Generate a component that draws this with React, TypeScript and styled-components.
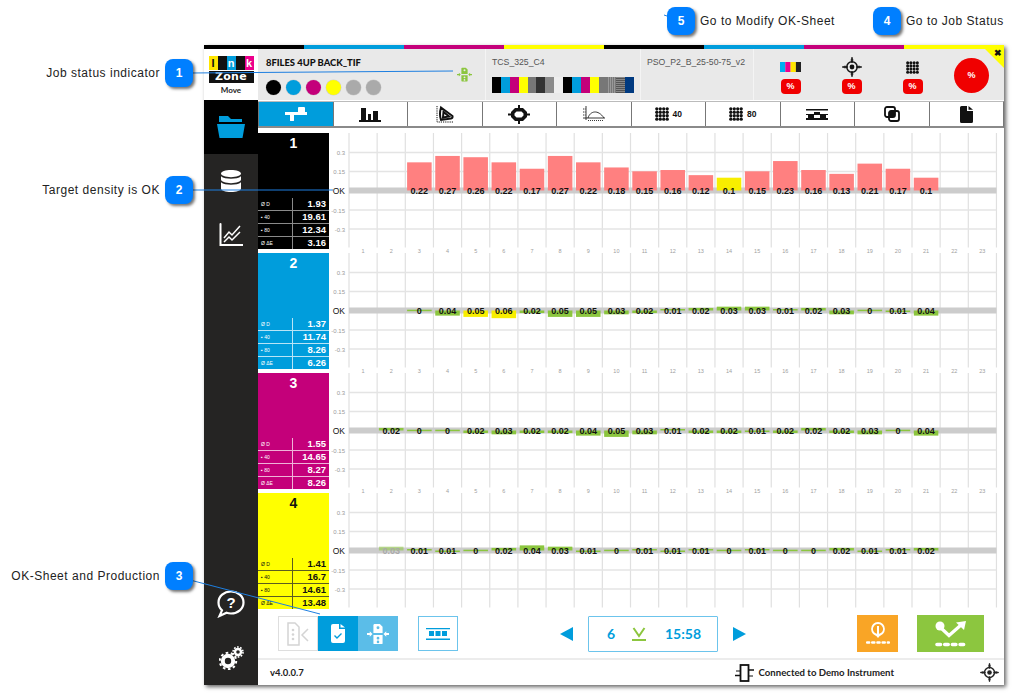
import React from "react";
import styled, { createGlobalStyle } from "styled-components";

const CYAN = "#009ddc";
const MAGENTA = "#c4007a";
const YELLOW = "#ffff00";
const GREEN = "#8cc63f";

const GlobalStyle = createGlobalStyle`
  html, body { margin: 0; padding: 0; background: #fff; }
  body { font-family: "Liberation Sans", Arial, sans-serif; }
`;

// Page and window
const Page = styled.div`
  position: relative;
  width: 1020px;
  height: 694px;
  padding: 45px 0 0 204px;
  box-sizing: border-box;
  overflow: hidden;
`;

const Window = styled.div`
  width: 800px;
  height: 640px;
  display: flex;
  flex-direction: column;
  background: #fff;
  box-shadow: 2px 2px 4px rgba(0, 0, 0, 0.6);
`;

const ColorStrip = styled.div`
  height: 4px;
  flex: none;
  display: grid;
  grid-template-columns: repeat(8, 1fr);
`;

const StripPart = styled.div<{ $c: string }>`
  background: ${(p) => p.$c};
`;

// Header
const Header = styled.header`
  height: 51px;
  flex: none;
  display: flex;
  position: relative;
  background: #e9e9e9;
  overflow: hidden;
`;

const LogoBox = styled.div`
  width: 54px;
  flex: none;
  background: #fff;
  display: flex;
  flex-direction: column;
  align-items: center;
  padding-top: 7px;
  box-sizing: border-box;
`;

const LogoTiles = styled.div`
  width: 45px;
  height: 14px;
  background: #111;
  display: flex;
  justify-content: space-between;
`;

const LogoTile = styled.span<{ $c: string; $fg: string }>`
  width: 9px;
  background: ${(p) => p.$c};
  color: ${(p) => p.$fg};
  font: bold 11px/14px "Liberation Sans", sans-serif;
  text-align: center;
`;

const LogoZone = styled.div`
  width: 45px;
  height: 12px;
  margin-top: 1px;
  background: #111;
  color: #fff;
  font: bold 11px/12px "DejaVu Sans", sans-serif;
  letter-spacing: 0.3px;
  text-align: center;
  overflow: hidden;
`;

const LogoMove = styled.div`
  margin-top: 2px;
  font: bold 8px/10px Lato, sans-serif;
  color: #222;
`;

const JobPanel = styled.div`
  width: 226px;
  flex: none;
  margin-left: 1px;
  padding: 8px 7px 0;
  box-sizing: border-box;
  position: relative;
`;

const JobTitle = styled.div`
  font: 900 9.4px/12px Lato, sans-serif;
  color: #111;
`;

const InkDots = styled.div`
  display: flex;
  gap: 5px;
  margin-top: 11px;
`;

const InkDot = styled.span<{ $c: string }>`
  width: 15px;
  height: 15px;
  border-radius: 50%;
  background: ${(p) => p.$c};
  box-shadow: 0 0 0 0.5px #cfcfcf;
`;

const StatusIcon = styled.div`
  position: absolute;
  left: 198px;
  top: 18px;
  color: ${GREEN};
  line-height: 0;
`;

const TargetPanel = styled.div<{ $w: number }>`
  width: ${(p) => p.$w}px;
  flex: none;
  padding: 8px 6px 0;
  box-sizing: border-box;
  border-left: 1px solid #f4f4f4;
  font: 8.7px/11px "Liberation Sans", sans-serif;
  color: #555;
`;

const SwatchBar = styled.div`
  display: flex;
  margin-top: 9px;
  height: 16px;
  width: 142px;
`;

const Swatch = styled.span<{ $c: string }>`
  flex: 1;
  background: ${(p) => p.$c};
`;

const MeterPanel = styled.div`
  flex: 1;
  display: flex;
  border-left: 1px solid #f4f4f4;
  padding-left: 16px;
  align-items: flex-start;
`;

const Meter = styled.div`
  width: 61px;
  flex: none;
  display: flex;
  flex-direction: column;
  align-items: center;
`;

const MeterMark = styled.div`
  height: 20px;
  margin: 8px 0 2px -20px;
  display: flex;
  align-items: center;
  color: #111;
`;

const PercentTag = styled.div`
  width: 20px;
  height: 15px;
  margin-left: -20px;
  border-radius: 4px;
  background: #f00000;
  color: #fff;
  font: bold 9px/15px "Liberation Sans", sans-serif;
  text-align: center;
`;

const PercentBall = styled.div`
  width: 35px;
  height: 35px;
  margin: 9px 0 0 1px;
  border-radius: 50%;
  background: #f00000;
  color: #fff;
  font: bold 9px/35px "Liberation Sans", sans-serif;
  text-align: center;
`;

const CloseCorner = styled.div`
  position: absolute;
  top: 0;
  right: 0;
  width: 0;
  height: 0;
  border-top: 19px solid ${YELLOW};
  border-left: 19px solid transparent;
`;

const CloseMark = styled.span`
  position: absolute;
  top: -1px;
  right: 2px;
  font: bold 9px/10px "Liberation Sans", sans-serif;
  color: #111;
`;

// Body
const Body = styled.div`
  flex: 1;
  min-height: 0;
  display: flex;
`;

const Sidebar = styled.nav`
  width: 54px;
  flex: none;
  background: #252423;
  display: flex;
  flex-direction: column;
  align-items: center;
  color: #fff;
`;

const SideItem = styled.div<{ $active?: boolean }>`
  width: 100%;
  height: 54px;
  flex: none;
  display: flex;
  align-items: center;
  justify-content: center;
  background: ${(p) => (p.$active ? "#000" : "transparent")};
`;

const SideSpacer = styled.div`
  flex: 1;
`;

const Main = styled.main`
  flex: 1;
  min-width: 0;
  display: flex;
  flex-direction: column;
`;

const TabBar = styled.div`
  height: 27px;
  flex: none;
  box-sizing: border-box;
  margin: 1px 0 5px;
  display: grid;
  grid-template-columns: repeat(10, 1fr);
  border-bottom: 2px solid #8a8a8a;
  border-right: 1px solid #777;
  border-top: 1px solid #bbb;
`;

const Tab = styled.div<{ $active?: boolean }>`
  display: flex;
  align-items: center;
  justify-content: center;
  gap: 4px;
  color: ${(p) => (p.$active ? "#fff" : "#111")};
  background: ${(p) => (p.$active ? CYAN : "#fff")};
  border-left: 1px solid #777;
  font: bold 8.5px/1 "Liberation Sans", sans-serif;
`;

const Rows = styled.div`
  height: 480px;
  flex: none;
  display: flex;
  flex-direction: column;
`;

const Row = styled.section`
  height: 120px;
  display: flex;
`;

const InkCard = styled.div<{ $bg: string; $fg: string; $rule: string }>`
  width: 71px;
  height: 116px;
  flex: none;
  display: flex;
  flex-direction: column;
  background: ${(p) => p.$bg};
  color: ${(p) => p.$fg};
  --rule: ${(p) => p.$rule};
`;

const CardTitle = styled.div`
  flex: 1;
  padding-top: 2px;
  text-align: center;
  font: bold 14px/17px "Liberation Sans", sans-serif;
`;

const StatRow = styled.div`
  height: 12px;
  display: grid;
  grid-template-columns: 35px 1fr;
  & + & {
    border-top: 1px solid var(--rule);
  }
`;

const StatName = styled.span`
  padding-left: 3px;
  font: 5px/12px "Liberation Sans", sans-serif;
  border-right: 1px solid var(--rule);
`;

const StatValue = styled.span`
  padding-right: 3px;
  text-align: right;
  font: bold 9.5px/12px "Liberation Sans", sans-serif;
`;

const ChartSvg = styled.svg`
  display: block;
  flex: none;
`;

const AxisText = styled.text`
  font: 6px "Liberation Sans", sans-serif;
  fill: #9a9a9a;
  text-anchor: end;
`;

const OkText = styled.text`
  font: 8.5px "Liberation Sans", sans-serif;
  fill: #111;
  text-anchor: end;
`;

const ZoneText = styled.text`
  font: 5.5px "Liberation Sans", sans-serif;
  fill: #a0a0a0;
  text-anchor: middle;
`;

const ValueText = styled.text<{ $faded?: boolean }>`
  font: bold 9px "Liberation Sans", sans-serif;
  fill: ${(p) => (p.$faded ? "#a9a9a9" : "#111")};
  text-anchor: middle;
`;

// Controls
const Controls = styled.div`
  height: 38px;
  flex: none;
  margin-top: 2px;
  padding-left: 20px;
  display: flex;
  align-items: stretch;
`;

const ModeGroup = styled.div`
  display: flex;
  margin-top: 1px;
`;

const ModeButton = styled.div<{ $bg: string; $fg: string; $edge: string }>`
  width: 40px;
  height: 35px;
  box-sizing: border-box;
  display: flex;
  align-items: center;
  justify-content: center;
  background: ${(p) => p.$bg};
  color: ${(p) => p.$fg};
  border: 1px solid ${(p) => p.$edge};
`;

const ViewButton = styled(ModeButton)`
  margin: 1px 0 0 20px;
`;

const Stepper = styled.div`
  margin-left: 102px;
  display: flex;
  align-items: center;
  color: ${CYAN};
`;

const Readout = styled.div`
  width: 130px;
  height: 36px;
  margin: 0 15px;
  box-sizing: border-box;
  display: flex;
  align-items: center;
  border: 1px solid #6cc4ec;
  border-radius: 1px;
  font: bold 14px/1 Lato, sans-serif;
  padding-left: 18px;
  color: ${CYAN};
`;

const ReadoutCount = styled.span`
  width: 25px;
`;

const ReadoutMark = styled.span`
  width: 33px;
  color: ${GREEN};
  line-height: 0;
`;

const ActionButton = styled.div<{ $c: string; $w: number; $gap: number }>`
  width: ${(p) => p.$w}px;
  height: 37px;
  margin-left: ${(p) => p.$gap}px;
  flex: none;
  display: flex;
  align-items: center;
  justify-content: center;
  background: ${(p) => p.$c};
  color: #fff;
`;

const StatusBar = styled.footer`
  flex: 1;
  margin-top: 5px;
  border-top: 2px solid #ececec;
  display: flex;
  align-items: center;
  padding: 0 5px 0 12px;
  font: bold 9.5px/1 Lato, sans-serif;
  color: #222;
`;

const Version = styled.span`
  flex: 1;
`;

const Connection = styled.span`
  display: flex;
  align-items: center;
  gap: 5px;
  margin-right: 86px;
  font-size: 9.6px;
`;

// Help-file annotations
const Callout = styled.div<{ $x: number; $y: number }>`
  position: absolute;
  left: ${(p) => p.$x}px;
  top: ${(p) => p.$y}px;
  display: flex;
  align-items: center;
  gap: 5px;
  z-index: 3;
`;

const LeftCallout = styled(Callout)`
  left: auto;
  right: ${(p) => p.$x}px;
`;

const CalloutText = styled.span`
  font: 12px/1 "Liberation Sans", sans-serif;
  letter-spacing: 0.52px;
  color: #222;
  white-space: nowrap;
`;

const Badge = styled.span`
  width: 28px;
  height: 28px;
  flex: none;
  border-radius: 8px;
  background: #007fff;
  color: #fff;
  font: bold 12px/28px "Liberation Sans", sans-serif;
  text-align: center;
  box-shadow: 2px 2px 3px rgba(0, 0, 0, 0.55);
`;

const LeaderLayer = styled.svg`
  position: absolute;
  inset: 0;
  z-index: 2;
  pointer-events: none;
`;

// Drawings
const DotsGrid = ({ size = 13 }: { size?: number }) => (
  <svg width={size} height={size} viewBox="0 0 14 14" fill="currentColor">
    {[0, 1, 2, 3].flatMap((r) =>
      [0, 1, 2, 3].map((c) => <circle key={`${r}${c}`} cx={1.8 + c * 3.47} cy={1.8 + r * 3.47} r={1.65} />)
    )}
  </svg>
);

const Crosshair = ({ size = 20 }: { size?: number }) => (
  <svg width={size} height={size} viewBox="0 0 20 20" fill="none" stroke="currentColor">
    <circle cx="10" cy="10" r="5.2" strokeWidth="1.5" />
    <circle cx="10" cy="10" r="2.4" fill="currentColor" stroke="none" />
    <path d="M10 0l1 3-1 3-1-3zM10 14l1 3-1 3-1-3zM0 10l3-1 3 1-3 1zM14 10l3-1 3 1-3 1z" fill="currentColor" strokeWidth="0.6" />
  </svg>
);

const TransferIcon = ({ size = 16 }: { size?: number }) => (
  <svg width={size} height={size} viewBox="0 0 24 24" fill="currentColor">
    <path fillRule="evenodd" d="M8 1h6l3 3v7H7V2zM12 3.500a1.600 1.600 0 1 0 0 3.200 1.600 1.600 0 0 0 0-3.200zM7 13h10v9a1 1 0 0 1-1 1H8a1 1 0 0 1-1-1zM12 15a1.500 1.500 0 1 0 0 3 1.500 1.500 0 0 0 0-3zM12 19.200a1.400 1.400 0 1 0 0 2.800 1.400 1.400 0 0 0 0-2.800z" />
    <path d="M0 11h3V9l3 3-3 3v-2H0zM24 11h-3V9l-3 3 3 3v-2h3z" />
  </svg>
);

const tabIcons = [
  <svg key="a" width="22" height="14" viewBox="0 0 22 14" fill="currentColor">
    <path d="M0 5h22v3H0zM5 5h4v8a1 1 0 0 1-4 0zM13 1a1 1 0 0 1 1-1h5a1 1 0 0 1 1 1v5h-7z" />
  </svg>,
  <svg key="b" width="22" height="15" viewBox="0 0 22 15" fill="currentColor">
    <path d="M0 13h22v2H0zM2 1h5v12H2zM9 7h3v6H9zM14 4h5v9h-5z" />
  </svg>,
  <svg key="c" width="20" height="19" viewBox="0 0 20 19" fill="none" stroke="currentColor">
    <path d="M2 1v16h17" strokeWidth="1" strokeDasharray="1.2 1" />
    <path d="M6 2.500 17.500 11 Q18 13 16 13.500 L6 15 Q4 9 6 2.500Z M8.500 7 L8 12.500 L14 11.500Z" strokeWidth="2" />
  </svg>,
  <svg key="d" width="22" height="19" viewBox="0 0 22 19" fill="currentColor">
    <path fillRule="evenodd" d="M7 3h8l4 4v5l-4 4H7l-4-4V7zM8.500 6.500 6.500 8.500v2l2 2h5l2-2v-2l-2-2z" />
    <path d="M10 0h2v3h-2zM10 16h2v3h-2zM0 8.500h3v2H0zM19 8.500h3v2h-3z" />
  </svg>,
  <svg key="e" width="22" height="16" viewBox="0 0 22 16" fill="none" stroke="#222" strokeWidth="0.9">
    <path d="M3 0v14M0 12h22" />
    <path d="M5 12C7 5 15 3 21 12" />
    <path d="M5 14.500h16" strokeDasharray="1 1" />
    <path d="M0 3h3M0 6h3M0 9h3" strokeDasharray="1 .6" />
  </svg>,
  <DotsGrid key="f" size={14} />,
  <DotsGrid key="g" size={14} />,
  <svg key="h" width="22" height="11" viewBox="0 0 22 11" fill="currentColor">
    <path d="M0 0h22v1.600H0zM0 9h22v2H0zM2 6h6v3H2zM8 3h6v3H8zM14 6h6v3h-6zM0 5h22v1H0z" />
  </svg>,
  <svg key="i" width="16" height="16" viewBox="0 0 16 16" fill="none" stroke="currentColor" strokeWidth="1.800">
    <rect x="1" y="1" width="10" height="10" rx="2" />
    <rect x="5" y="5" width="10" height="10" rx="2" />
    <rect x="5" y="5" width="6" height="6" fill="currentColor" stroke="none" />
  </svg>,
  <svg key="j" width="13" height="17" viewBox="0 0 13 17" fill="currentColor">
    <path d="M1.500 0H7v5h6v10.500a1.500 1.500 0 0 1-1.500 1.500h-10A1.500 1.500 0 0 1 0 15.500v-14A1.500 1.500 0 0 1 1.500 0zM8.500 0 13 3.800H8.500z" />
  </svg>,
];

const tabLabels = ["", "", "", "", "", "40", "80", "", "", ""];

const FolderIcon = () => (
  <svg width="28" height="22" viewBox="0 0 28 22" fill={CYAN}>
    <path d="M2 0h9l3 3h11v3H2zM0 8h28l-2.500 14h-23z" />
  </svg>
);

const DatabaseIcon = () => (
  <svg width="20" height="22" viewBox="0 0 20 22" fill="currentColor">
    <path d="M10 0c5.500 0 10 1.600 10 3.600S15.500 7.200 10 7.200 0 5.600 0 3.600 4.500 0 10 0zM0 6.300c2 1.800 6 2.500 10 2.500s8-.7 10-2.500v3.300c0 2-4.500 3.600-10 3.600S0 11.600 0 9.600zM0 12.300c2 1.800 6 2.500 10 2.500s8-.7 10-2.500v6.100c0 2-4.500 3.600-10 3.600S0 20.400 0 18.400z" />
  </svg>
);

const TrendIcon = () => (
  <svg width="24" height="24" viewBox="0 0 24 24" fill="none" stroke="currentColor">
    <path d="M1.500 1v21h22" strokeWidth="2" strokeLinecap="round" />
    <path d="M5 15l5-6 3 3 8-9M5 19l5-5 3 3 8-8" strokeWidth="1.500" />
  </svg>
);

const HelpIcon = () => (
  <svg width="28" height="28" viewBox="0 0 28 28" fill="none">
    <path d="M14 1.500c7 0 12.500 4.800 12.500 11S21 23.500 14 23.500c-1.600 0-3-.2-4.400-.7L2.500 26l2.500-5.600C2.800 18.400 1.500 15.600 1.500 12.500c0-6.200 5.500-11 12.500-11z" stroke="currentColor" strokeWidth="2.200" />
    <text x="14" y="18" textAnchor="middle" fill="currentColor" style={{ font: 'bold 15px "Liberation Sans", sans-serif' }}>?</text>
  </svg>
);

const GearsIcon = () => (
  <svg width="25" height="24" viewBox="0 0 25 24" fill="currentColor">
    <circle cx="9" cy="15" r="5.200" fill="none" stroke="currentColor" strokeWidth="4" />
    <circle cx="9" cy="15" r="8.200" fill="none" stroke="currentColor" strokeWidth="2" strokeDasharray="2.600 2.550" />
    <circle cx="19" cy="6" r="3" fill="none" stroke="currentColor" strokeWidth="2.400" />
    <circle cx="19" cy="6" r="5" fill="none" stroke="currentColor" strokeWidth="1.600" strokeDasharray="1.700 1.440" />
  </svg>
);

const SheetBackIcon = () => (
  <svg width="22" height="24" viewBox="0 0 22 24" fill="none" stroke="#d4d4d4">
    <path d="M1 1h7l4 4v18H1z" strokeWidth="1.500" />
    <g fill="#d4d4d4" stroke="none">
      <circle cx="6" cy="8" r="1.300" />
      <circle cx="6" cy="12.500" r="1.300" />
      <circle cx="6" cy="17" r="1.300" />
    </g>
    <path d="M21 7l-6 6 6 6" strokeWidth="1.500" />
  </svg>
);

const SheetCheckIcon = () => (
  <svg width="14" height="19" viewBox="0 0 14 19" fill="currentColor">
    <path d="M2 0h6v5h6v12a2 2 0 0 1-2 2H2a2 2 0 0 1-2-2V2a2 2 0 0 1 2-2zM9.500 0 14 3.600H9.500z" />
    <path d="M3.500 11.500l2.500 2.500 4.500-4.500" fill="none" stroke={CYAN} strokeWidth="1.400" />
  </svg>
);

const StripsIcon = () => (
  <svg width="24" height="12" viewBox="0 0 24 12" fill={CYAN}>
    <path d="M0 0h24v1.200H0zM0 10.500h24V12H0zM3 3h5v5H3zM9.500 3h5v5h-5zM16 3h5v5h-5z" />
  </svg>
);

const TouchIcon = () => (
  <svg width="24" height="26" viewBox="0 0 24 26" fill="none" stroke="currentColor">
    <circle cx="12" cy="8" r="6" strokeWidth="1.800" />
    <path d="M12 5v11" strokeWidth="2" />
    <path d="M9 13.500l3 3.500 3-3.500z" fill="currentColor" stroke="none" />
    <path d="M1 21.500h22" strokeWidth="2.400" strokeLinecap="round" strokeDasharray="2.200 3" />
  </svg>
);

const ConfirmIcon = () => (
  <svg width="34" height="26" viewBox="0 0 34 26" fill="none" stroke="currentColor">
    <circle cx="6" cy="5" r="4.500" fill="currentColor" stroke="none" />
    <path d="M7 7l8 7.500L27 4" strokeWidth="3.200" />
    <path d="M22 1.500L32 0l-2 9z" fill="currentColor" stroke="none" />
    <path d="M3 23.500h28" strokeWidth="3.600" strokeLinecap="round" strokeDasharray="3.500 4.200" />
  </svg>
);

const InstrumentIcon = () => (
  <svg width="19" height="18" viewBox="0 0 19 18" fill="none" stroke="#111">
    <rect x="5.500" y="1" width="8" height="16" strokeWidth="1.800" />
    <path d="M0 11.500h5M14 6h5" strokeWidth="1.500" />
    <path d="M1 7h4M14 12h4" strokeWidth="1" />
  </svg>
);

const CmykChip = () => (
  <svg width="21" height="10" viewBox="0 0 21 10">
    <rect width="5.300" height="10" fill="#00aeef" />
    <rect x="5.300" width="5.300" height="10" fill="#ec008c" />
    <rect x="10.600" width="5.300" height="10" fill="#ffe600" />
    <rect x="15.900" width="5.100" height="10" fill="#222" />
  </svg>
);

// Data
type Bar = { v: number; c: "r" | "y" | "g"; down?: boolean; faded?: boolean };

const up = (v: number, c: Bar["c"] = "g"): Bar => ({ v, c });
const dn = (v: number, c: Bar["c"] = "g"): Bar => ({ v, c, down: true });

const inks = [
  {
    id: 1,
    bg: "#000000",
    fg: "#fff",
    rule: "#8a8a8a",
    stats: ["1.93", "19.61", "12.34", "3.16"],
    first: 3,
    bars: [0.22, 0.27, 0.26, 0.22, 0.17, 0.27, 0.22, 0.18, 0.15, 0.16, 0.12, 0.1, 0.15, 0.23, 0.16, 0.13, 0.21, 0.17, 0.1].map(
      (v, i) => up(v, i === 11 ? "y" : "r")
    ),
  },
  {
    id: 2,
    bg: CYAN,
    fg: "#fff",
    rule: "#b9e4f6",
    stats: ["1.37", "11.74", "8.26", "6.26"],
    first: 3,
    bars: [
      up(0), dn(0.04), dn(0.05, "y"), dn(0.06, "y"), dn(0.02), dn(0.05), dn(0.05), dn(0.03), dn(0.02), up(0.01),
      up(0.02), up(0.03), up(0.03), up(0.01), up(0.02), dn(0.03), up(0), dn(0.01), dn(0.04),
    ],
  },
  {
    id: 3,
    bg: MAGENTA,
    fg: "#fff",
    rule: "#eeb3d8",
    stats: ["1.55", "14.65", "8.27", "8.26"],
    first: 2,
    bars: [
      up(0.02), up(0), up(0), dn(0.02), dn(0.03), dn(0.02), dn(0.02), dn(0.04), dn(0.05), dn(0.03),
      up(0.01), dn(0.02), dn(0.02), dn(0.01), dn(0.02), up(0.02), dn(0.02), dn(0.03), up(0), dn(0.04),
    ],
  },
  {
    id: 4,
    bg: YELLOW,
    fg: "#111",
    rule: "#5c5c20",
    stats: ["1.41", "16.7", "14.61", "13.48"],
    first: 2,
    bars: [
      { ...up(0.03), faded: true }, up(0.01), dn(0.01), dn(0), up(0.02), up(0.04), up(0.03), dn(0.01), dn(0), up(0.01),
      dn(0.01), up(0.01), up(0), up(0.01), dn(0), dn(0), up(0.02), dn(0.01), up(0.01), up(0.02),
    ],
  },
];

const statNames = ["Ø D", "▪ 40", "▪ 80", "Ø ΔE"];

const inkSet = ["#000", CYAN, MAGENTA, "#ffff00", "#aaaaaa", "#aaaaaa"];

const swatches = [
  "#000", CYAN, MAGENTA, "#ffff00", "#777", "#333", "#8a8a8a", "#eeeeee",
  "#000", CYAN, MAGENTA, "#ffff00", "#777",
  "repeating-linear-gradient(90deg, #777 0 1px, #999 1px 2px)",
  "repeating-linear-gradient(0deg, #555 0 1px, #888 1px 2px)",
  "#003a80",
];

const barColors = { r: "#ff8080", y: "#f8ee00", g: GREEN };

const COL = 28.15;
const GRID_X = 20;
const ZERO = 57.5;
const SCALE = 128;

const InkChart = ({ first, bars, zones }: { first: number; bars: Bar[]; zones: boolean }) => {
  const cols = Array.from({ length: 24 }, (_, i) => GRID_X + i * COL);
  return (
    <ChartSvg width="675" height="120" viewBox="0 0 675 120">
      {cols.map((x) => (
        <line key={x} x1={x} x2={x} y1="0" y2="114.5" stroke="#e0e0e0" strokeWidth="1.2" />
      ))}
      {[19.5, 38.5, 77, 96].map((y) => (
        <line key={y} x1={GRID_X} x2={GRID_X + 23 * COL} y1={y} y2={y} stroke="#e4e4e4" strokeWidth="1.3" />
      ))}
      <rect x={GRID_X} y={ZERO - 3} width={23 * COL} height="6" fill="#cccccc" />
      <AxisText x="16" y="22">0.3</AxisText>
      <AxisText x="16" y="41">0.15</AxisText>
      <OkText x="16" y={ZERO + 3}>OK</OkText>
      <AxisText x="16" y="79.5">-0.15</AxisText>
      <AxisText x="16" y="98.5">-0.3</AxisText>
      {zones &&
        cols.slice(0, 23).map((x, i) => (
          <ZoneText key={x} x={x + COL / 2} y="120">{i + 1}</ZoneText>
        ))}
      {bars.map((b, i) => {
        const x = GRID_X + (first - 1 + i) * COL;
        const h = Math.max(1.5, b.v * SCALE);
        const y = b.down ? ZERO : ZERO - h;
        return (
          <rect
            key={i}
            opacity={b.faded ? 0.55 : 1}
            x={x + 1.8}
            y={b.v === 0 ? ZERO - 0.8 : y}
            width={COL - 3.6}
            height={h}
            fill={barColors[b.c]}
          />
        );
      })}
      {bars.map((b, i) => (
        <ValueText key={i} $faded={b.faded} x={GRID_X + (first - 1 + i) * COL + COL / 2} y={ZERO + 3}>
          {b.v}
        </ValueText>
      ))}
    </ChartSvg>
  );
};

export default function App() {
  return (
    <Page>
      <GlobalStyle />
      <Window>
        <ColorStrip>
          {["#000", CYAN, MAGENTA, "#ffff00", "#000", CYAN, MAGENTA, "#ffff00"].map((c, i) => (
            <StripPart key={i} $c={c} />
          ))}
        </ColorStrip>

        <Header>
          <LogoBox>
            <LogoTiles>
              <LogoTile $c="#ffe600" $fg="#111">I</LogoTile>
              <LogoTile $c={CYAN} $fg="#fff">n</LogoTile>
              <LogoTile $c="#ec008c" $fg="#fff">k</LogoTile>
            </LogoTiles>
            <LogoZone>Zone</LogoZone>
            <LogoMove>Move</LogoMove>
          </LogoBox>
          <JobPanel>
            <JobTitle>8FILES 4UP BACK_TIF</JobTitle>
            <InkDots>
              {inkSet.map((c, i) => (
                <InkDot key={i} $c={c} />
              ))}
            </InkDots>
            <StatusIcon>
              <TransferIcon size={15} />
            </StatusIcon>
          </JobPanel>
          <TargetPanel $w={155}>
            TCS_325_C4
            <SwatchBar>
              {swatches.map((c, i) => (
                <Swatch key={i} $c={c} />
              ))}
            </SwatchBar>
          </TargetPanel>
          <TargetPanel $w={113}>PSO_P2_B_25-50-75_v2</TargetPanel>
          <MeterPanel>
            <Meter>
              <MeterMark><CmykChip /></MeterMark>
              <PercentTag>%</PercentTag>
            </Meter>
            <Meter>
              <MeterMark><Crosshair /></MeterMark>
              <PercentTag>%</PercentTag>
            </Meter>
            <Meter>
              <MeterMark><DotsGrid /></MeterMark>
              <PercentTag>%</PercentTag>
            </Meter>
            <PercentBall>%</PercentBall>
          </MeterPanel>
          <CloseCorner />
          <CloseMark>✖</CloseMark>
        </Header>

        <Body>
          <Sidebar>
            <SideItem $active><FolderIcon /></SideItem>
            <SideItem><DatabaseIcon /></SideItem>
            <SideItem><TrendIcon /></SideItem>
            <SideSpacer />
            <SideItem><HelpIcon /></SideItem>
            <SideItem><GearsIcon /></SideItem>
          </Sidebar>

          <Main>
            <TabBar>
              {tabIcons.map((icon, i) => (
                <Tab key={i} $active={i === 0}>
                  {icon}
                  {tabLabels[i] && <span>{tabLabels[i]}</span>}
                </Tab>
              ))}
            </TabBar>

            <Rows>
              {inks.map((ink, r) => (
                <Row key={ink.id}>
                  <InkCard $bg={ink.bg} $fg={ink.fg} $rule={ink.rule}>
                    <CardTitle>{ink.id}</CardTitle>
                    {ink.stats.map((s, i) => (
                      <StatRow key={i}>
                        <StatName>{statNames[i]}</StatName>
                        <StatValue>{s}</StatValue>
                      </StatRow>
                    ))}
                  </InkCard>
                  <InkChart first={ink.first} bars={ink.bars} zones={r < inks.length - 1} />
                </Row>
              ))}
            </Rows>

            <Controls>
              <ModeGroup>
                <ModeButton $bg="#fff" $fg="#ccc" $edge="#dedede"><SheetBackIcon /></ModeButton>
                <ModeButton $bg={CYAN} $fg="#fff" $edge={CYAN}><SheetCheckIcon /></ModeButton>
                <ModeButton $bg="#5bbde8" $fg="#fff" $edge="#5bbde8"><TransferIcon size={22} /></ModeButton>
              </ModeGroup>
              <ViewButton $bg="#fff" $fg={CYAN} $edge="#6cc4ec"><StripsIcon /></ViewButton>
              <Stepper>
                <svg width="13" height="14" viewBox="0 0 13 14" fill="currentColor"><path d="M13 0v14L0 7z" /></svg>
                <Readout>
                  <ReadoutCount>6</ReadoutCount>
                  <ReadoutMark>
                    <svg width="14" height="14" viewBox="0 0 14 14" fill="none" stroke="currentColor" strokeWidth="2">
                      <path d="M1.5 1l5.500 8 5.500-8" />
                      <path d="M0 13h14" />
                    </svg>
                  </ReadoutMark>
                  <span>15:58</span>
                </Readout>
                <svg width="13" height="14" viewBox="0 0 13 14" fill="currentColor"><path d="M0 0v14l13-7z" /></svg>
              </Stepper>
              <ActionButton $c="#f9a526" $w={41} $gap={111}><TouchIcon /></ActionButton>
              <ActionButton $c={GREEN} $w={67} $gap={19}><ConfirmIcon /></ActionButton>
            </Controls>

            <StatusBar>
              <Version>v4.0.0.7</Version>
              <Connection>
                <InstrumentIcon />
                Connected to Demo Instrument
              </Connection>
              <Crosshair size={19} />
            </StatusBar>
          </Main>
        </Body>
      </Window>

      <LeaderLayer width="1020" height="694" viewBox="0 0 1020 694" fill="none" stroke="#1e7fe0">
        <path d="M190 73 L453 71" />
        <path d="M190 190 L333 190" />
        <path d="M190 580 L320 614" />
        <path d="M664 15 L670 17" />
      </LeaderLayer>

      <LeftCallout $x={827} $y={59}>
        <CalloutText>Job status indicator</CalloutText>
        <Badge>1</Badge>
      </LeftCallout>
      <LeftCallout $x={827} $y={176}>
        <CalloutText>Target density is OK</CalloutText>
        <Badge>2</Badge>
      </LeftCallout>
      <LeftCallout $x={827} $y={562}>
        <CalloutText>OK-Sheet and Production</CalloutText>
        <Badge>3</Badge>
      </LeftCallout>
      <Callout $x={873} $y={7}>
        <Badge>4</Badge>
        <CalloutText>Go to Job Status</CalloutText>
      </Callout>
      <Callout $x={667} $y={7}>
        <Badge>5</Badge>
        <CalloutText>Go to Modify OK-Sheet</CalloutText>
      </Callout>
    </Page>
  );
}
